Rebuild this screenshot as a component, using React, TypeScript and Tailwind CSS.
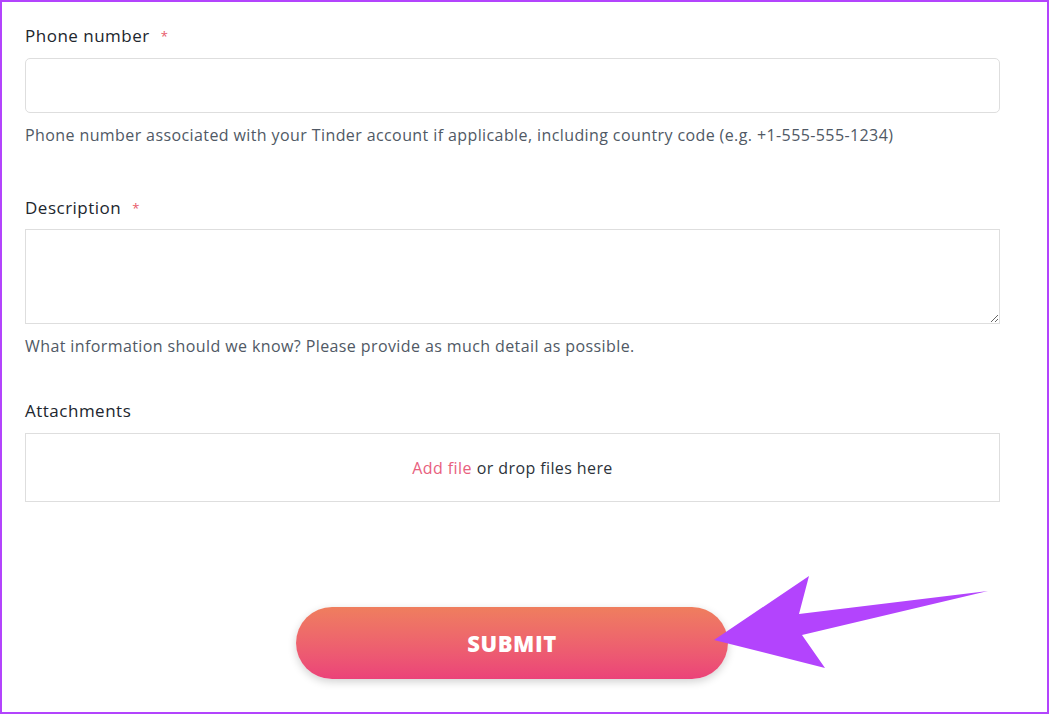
export default function App() {
  return (
    <div className="relative w-[1049px] h-[714px] overflow-hidden bg-white border-2 border-[#b344fd] font-['Open_Sans',sans-serif]">
      <div className="pl-[23px] pr-[47px] pt-[22px] flex flex-col">
        {/* Phone number */}
        <label className="text-[17px] leading-[24px] tracking-[0.5px] text-[#21262e]">
          Phone number <span className="text-[#e85a6a] text-[13px] align-top ml-[6px]">*</span>
        </label>
        <div className="mt-[10px] h-[55px] rounded-[5px] border border-[#dedede] bg-white" />
        <p className="mt-[11px] text-[16px] leading-[22px] tracking-[0.4px] text-[#505965]">
          Phone number associated with your Tinder account if applicable, including country code (e.g. +1-555-555-1234)
        </p>

        {/* Description */}
        <label className="mt-[50px] text-[17px] leading-[24px] tracking-[0.5px] text-[#21262e]">
          Description <span className="text-[#e85a6a] text-[13px] align-top ml-[6px]">*</span>
        </label>
        <textarea className="mt-[9px] h-[95px] border border-[#dedede] bg-white outline-none resize-y" />
        <p className="mt-[11px] text-[16px] leading-[22px] tracking-[0.4px] text-[#505965]">
          What information should we know? Please provide as much detail as possible.
        </p>

        {/* Attachments */}
        <label className="mt-[42px] text-[17px] leading-[24px] tracking-[0.5px] text-[#21262e]">Attachments</label>
        <div className="mt-[10px] h-[69px] border border-[#dedede] flex items-center justify-center text-[16px] tracking-[0.4px]">
          <span className="text-[#e8607e]">Add file</span>
          <span className="ml-[5px] text-[#2d333b]">or drop files here</span>
        </div>

        <div className="mt-[105px] flex justify-center">
          <button className="ml-[-1px] w-[432px] h-[72px] rounded-full bg-gradient-to-b from-[#ef7e5e] to-[#eb4279] text-white font-extrabold text-[22px] tracking-[0.6px] shadow-[0_3px_8px_rgba(0,0,0,0.18)]">
            SUBMIT
          </button>
        </div>
      </div>

      {/* annotation arrow */}
      <svg className="absolute left-0 top-0" width="1049" height="714" viewBox="0 0 1049 714">
        <polygon
          points="712,638 807,574 797,612 986,589 800,633 823,666"
          fill="#b344fd"
        />
      </svg>
    </div>
  );
}
